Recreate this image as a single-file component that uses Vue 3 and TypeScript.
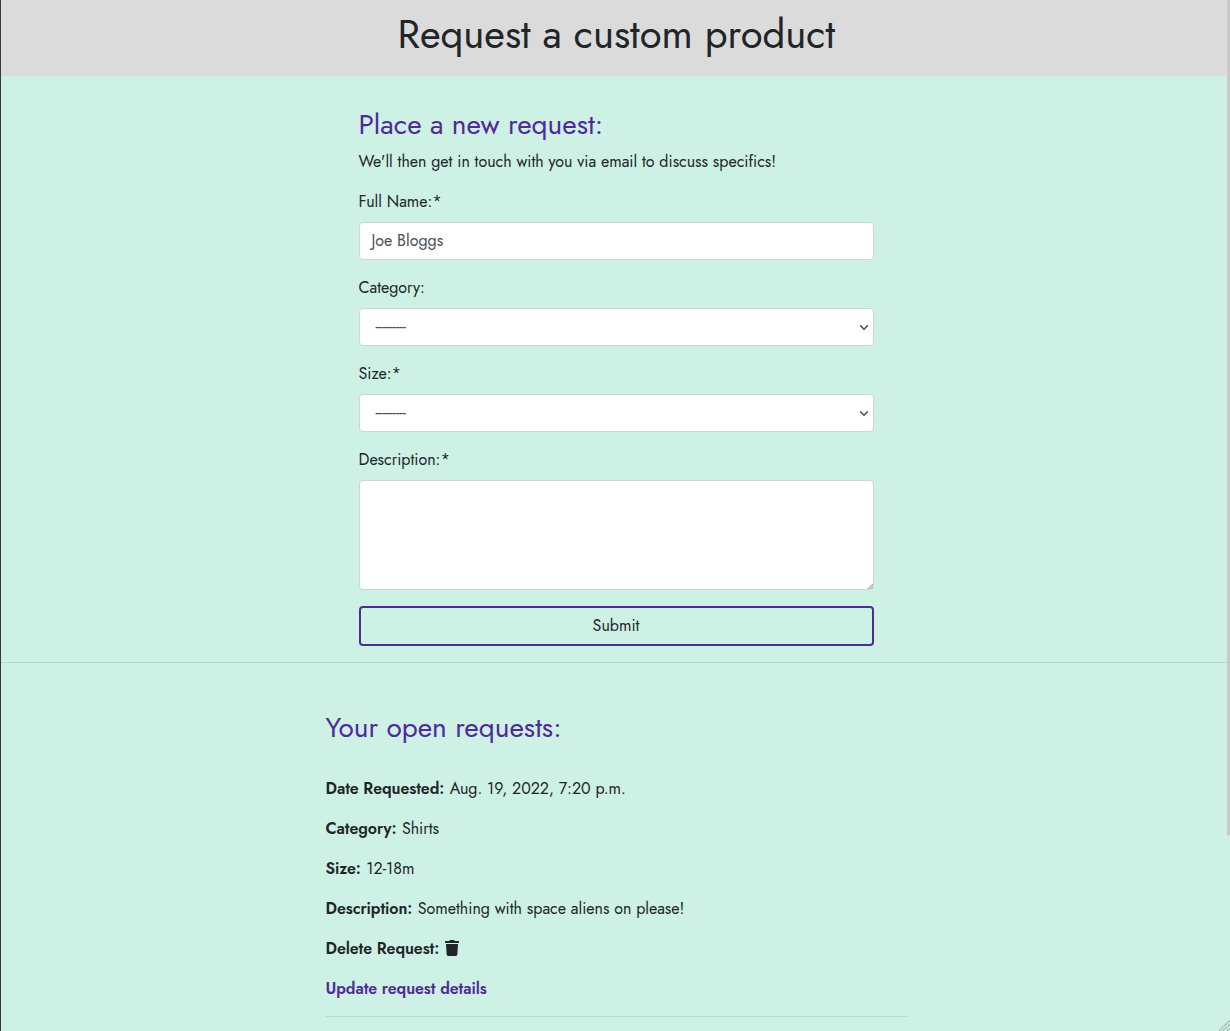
<script setup lang="ts">
interface RequestField {
  label: string
  value: string
}

const selects = [
  { id: 'category', label: 'Category:' },
  { id: 'size', label: 'Size:*' },
]

const fields: RequestField[] = [
  { label: 'Date Requested:', value: 'Aug. 19, 2022, 7:20 p.m.' },
  { label: 'Category:', value: 'Shirts' },
  { label: 'Size:', value: '12-18m' },
  { label: 'Description:', value: 'Something with space aliens on please!' },
]
</script>

<template>
  <div class="page">
    <main class="content">
      <header class="banner">
        <h1>Request a custom product</h1>
      </header>

      <form class="request-form" @submit.prevent>
        <h2>Place a new request:</h2>
        <p class="intro">We'll then get in touch with you via email to discuss specifics!</p>
        <div class="group">
          <label>Full Name:*</label>
          <div class="control">Joe Bloggs</div>
        </div>
        <div v-for="s in selects" :key="s.id" class="group">
          <label>{{ s.label }}</label>
          <div class="control select">
            <span class="dashes">---------</span>
            <svg class="chevron" width="10" height="7" viewBox="0 0 10 7">
              <path d="M1.2 1.4L5 5.2L8.8 1.4" fill="none" stroke="#495057" stroke-width="1.5" />
            </svg>
          </div>
        </div>
        <div class="group">
          <label>Description:*</label>
          <div class="control area">
            <svg class="corner" width="6" height="6" viewBox="0 0 6 6">
              <path d="M0 6L6 0V6z" fill="#d0d0d0" />
              <path d="M1 6L6 1M4 6L6 4" stroke="#999" stroke-width=".8" stroke-dasharray="1 .5" />
            </svg>
          </div>
        </div>
        <button type="submit">Submit</button>
      </form>

      <hr />

      <section class="requests">
        <h2>Your open requests:</h2>
        <p v-for="f in fields" :key="f.label" class="line">
          <strong>{{ f.label }}</strong>
          <span>{{ f.value }}</span>
        </p>
        <p class="line">
          <strong>Delete Request:</strong>
          <svg class="trash" width="14" height="16" viewBox="0 0 448 512">
            <path fill="#212529" d="M432 32H312l-9-19A24 24 0 0 0 281 0H167a24 24 0 0 0-22 13l-9 19H16A16 16 0 0 0 0 48v32a16 16 0 0 0 16 16h416a16 16 0 0 0 16-16V48a16 16 0 0 0-16-16zM32 128l21 339a48 48 0 0 0 48 45h246a48 48 0 0 0 48-45l21-339z" />
          </svg>
        </p>
        <p class="line"><a><strong>Update request details</strong></a></p>
        <hr />
      </section>
    </main>
    <div class="scroll-track"><div class="scroll-thumb"></div></div>
    <svg class="grip" width="11" height="11" viewBox="0 0 11 11">
      <path d="M0 11L11 0M4 11L11 4M8 11L11 8" stroke="#999" stroke-width="1.2" stroke-dasharray="1.5 .7" />
    </svg>
  </div>
</template>

<style>
body {
  margin: 0;
  overflow: hidden;
}
</style>

<style scoped>
* {
  box-sizing: border-box;
}
.page {
  position: relative;
  display: flex;
  height: 1031px;
  overflow: hidden;
  border-left: 1px solid #39363e;
  background: #cdf1e4;
  color: #212529;
  font: 400 16px/24px Jost, Lato, sans-serif;
}
.content {
  flex: 1;
}
h1,
h2,
p {
  margin: 0;
  font-weight: 400;
  white-space: nowrap;
}
.banner {
  height: 76px;
  padding: 10px 0 0 396.5px;
  background: #dbdbdb;
}
h1 {
  font-size: 40px;
  line-height: 48px;
}
h2 {
  color: #52299a;
  font-size: 28px;
  line-height: 34px;
}
.request-form {
  width: 515px;
  margin: 32px 0 0 358px;
}
.request-form h2,
.intro,
label {
  margin-left: -0.5px;
}
.intro {
  margin-top: 8px;
  margin-bottom: 16px;
}
.group {
  margin-bottom: 16px;
}
label {
  display: block;
  margin-bottom: 8px;
}
.control {
  display: flex;
  align-items: center;
  width: 100%;
  height: 38px;
  padding: 0 11.5px;
  border: 1px solid #ced4da;
  border-radius: 4px;
  background: #fff;
  color: #495057;
}
.select {
  justify-content: space-between;
  padding: 0 4px 0 15.5px;
}
.dashes {
  white-space: nowrap;
}
.area {
  align-items: flex-end;
  justify-content: flex-end;
  height: 110px;
  padding: 0;
}
button {
  display: block;
  width: 100%;
  height: 40px;
  padding: 0 1px 0 0;
  border: 2px solid #52299a;
  border-radius: 4px;
  background: transparent;
  color: inherit;
  font: inherit;
}
hr {
  height: 1px;
  margin: 16px 0 0;
  border: 0;
  background: #b8d9ce;
}
.requests {
  width: 581px;
  margin: 48px 0 0 324.5px;
}
.requests h2 {
  margin-bottom: 32px;
}
.line {
  display: flex;
  gap: 5.5px;
  height: 24px;
  margin-bottom: 16px;
}
.requests hr {
  margin-top: -1px;
}
strong {
  font-weight: 600;
  letter-spacing: -0.07px;
}
.trash {
  margin-top: 3px;
}
a {
  color: #52299a;
}
.scroll-track {
  width: 3px;
}
.scroll-thumb {
  height: 835px;
  background: #c9c9c9;
}
.grip {
  position: absolute;
  right: 0;
  bottom: 0;
}
</style>
